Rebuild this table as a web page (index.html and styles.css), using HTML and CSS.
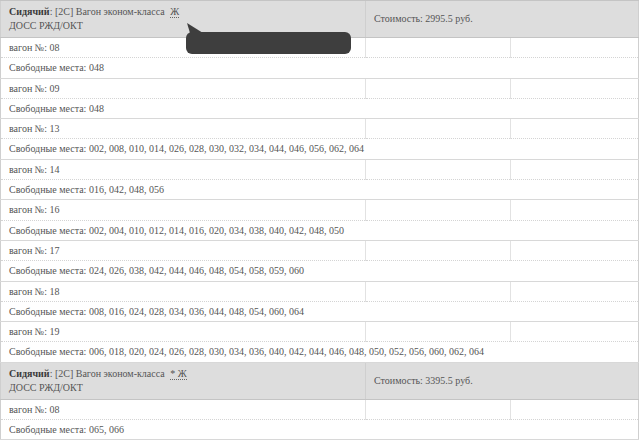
FILE: index.html
```html
<!DOCTYPE html>
<html lang="ru">
<head>
<meta charset="utf-8">
<title>Места</title>
<link rel="stylesheet" href="styles.css">
</head>
<body>
<div class="wrap">
<table class="trains">
<colgroup><col class="w1"><col class="w2"><col class="w3"></colgroup>
<tbody>
<tr class="head"><td><b>Сидячий</b>: [2С] Вагон эконом-класса <abbr class="mark">Ж</abbr><br>ДОСС РЖД/ОКТ</td><td colspan="2" class="price">Стоимость: 2995.5 руб.</td></tr>
<tr class="car"><td>вагон №: 08</td><td></td><td></td></tr>
<tr class="seats"><td colspan="3">Свободные места: 048</td></tr>
<tr class="car"><td>вагон №: 09</td><td></td><td></td></tr>
<tr class="seats"><td colspan="3">Свободные места: 048</td></tr>
<tr class="car"><td>вагон №: 13</td><td></td><td></td></tr>
<tr class="seats"><td colspan="3">Свободные места: 002, 008, 010, 014, 026, 028, 030, 032, 034, 044, 046, 056, 062, 064</td></tr>
<tr class="car"><td>вагон №: 14</td><td></td><td></td></tr>
<tr class="seats"><td colspan="3">Свободные места: 016, 042, 048, 056</td></tr>
<tr class="car"><td>вагон №: 16</td><td></td><td></td></tr>
<tr class="seats"><td colspan="3">Свободные места: 002, 004, 010, 012, 014, 016, 020, 034, 038, 040, 042, 048, 050</td></tr>
<tr class="car"><td>вагон №: 17</td><td></td><td></td></tr>
<tr class="seats"><td colspan="3">Свободные места: 024, 026, 038, 042, 044, 046, 048, 054, 058, 059, 060</td></tr>
<tr class="car"><td>вагон №: 18</td><td></td><td></td></tr>
<tr class="seats"><td colspan="3">Свободные места: 008, 016, 024, 028, 034, 036, 044, 048, 054, 060, 064</td></tr>
<tr class="car"><td>вагон №: 19</td><td></td><td></td></tr>
<tr class="seats"><td colspan="3">Свободные места: 006, 018, 020, 024, 026, 028, 030, 034, 036, 040, 042, 044, 046, 048, 050, 052, 056, 060, 062, 064</td></tr>
<tr class="head"><td><b>Сидячий</b>: [2С] Вагон эконом-класса <abbr class="mark">* Ж</abbr><br>ДОСС РЖД/ОКТ</td><td colspan="2" class="price">Стоимость: 3395.5 руб.</td></tr>
<tr class="car"><td>вагон №: 08</td><td></td><td></td></tr>
<tr class="seats"><td colspan="3">Свободные места: 065, 066</td></tr>
</tbody>
</table>
<div class="tip">
<svg class="tip-arrow" width="20" height="12" viewBox="0 0 20 12"><path d="M1 1 L17 11 L4 11 Z" fill="#3e3e3e"/></svg>
</div>
</div>
</body>
</html>
```

FILE: styles.css
```css
html, body {
  margin: 0;
  padding: 0;
  background: #fff;
}
.wrap {
  position: relative;
  width: 640px;
}
.trains {
  width: 638px;
  table-layout: fixed;
  border-collapse: collapse;
  border: 1px solid #cfcfcf;
  font-family: "Liberation Serif", "Times New Roman", serif;
  font-size: 10px;
  color: #555;
}
.w1 { width: 365px; }
.w2 { width: 145px; }
.w3 { width: 128px; }
.trains td {
  padding: 3px 8px;
  line-height: 13.3px;
  vertical-align: middle;
  white-space: nowrap;
}
.head td {
  background: #dddddd;
  padding: 4px 8px 4px;
  line-height: 14px;
  border-bottom: 1px solid #c4c4c4;
  border-top: 1px solid #c4c4c4;
}
.head td.price {
  border-left: 1px solid #cfcfcf;
}
.head b {
  color: #3a3a3a;
}
.mark {
  text-decoration: none;
  border-bottom: 1px dotted #666;
  margin-left: 3px;
}
.car td {
  border-bottom: 1px dotted #d4d4d4;
}
.car td + td {
  border-left: 1px solid #e2e2e2;
}
.seats td {
  border-bottom: 1px solid #d8d8d8;
}
.tip {
  position: absolute;
  left: 186px;
  top: 32px;
  width: 165px;
  height: 22px;
  background: #3e3e3e;
  border-radius: 6px;
}
.tip-arrow {
  position: absolute;
  left: 0;
  top: -10px;
}
```
